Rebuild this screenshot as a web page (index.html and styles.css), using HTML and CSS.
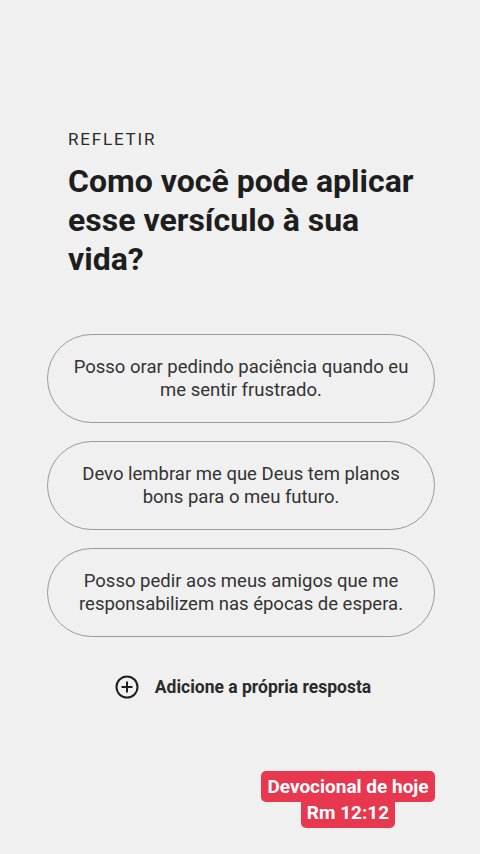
FILE: index.html
```html
<!DOCTYPE html>
<html lang="pt">
<head>
    <meta charset="UTF-8">
    <meta name="viewport" content="width=device-width, initial-scale=1.0">
    <title>Refletir</title>
    <link rel="stylesheet" href="styles.css">
</head>
<body>
    <main class="reflect">
        <p class="eyebrow">REFLETIR</p>
        <h1 class="question">Como você pode aplicar esse versículo à sua vida?</h1>

        <div class="answers">
            <div class="answer">Posso orar pedindo paciência quando eu me sentir frustrado.</div>
            <div class="answer">Devo lembrar me que Deus tem planos bons para o meu futuro.</div>
            <div class="answer">Posso pedir aos meus amigos que me responsabilizem nas épocas de espera.</div>
        </div>

        <div class="add-own">
            <svg class="add-icon" width="24" height="24" viewBox="0 0 24 24">
                <circle cx="12" cy="12" r="10.5" fill="none" stroke="#1f1f1f" stroke-width="2"/>
                <path d="M12 6.5v11M6.5 12h11" stroke="#1f1f1f" stroke-width="2"/>
            </svg>
            <span>Adicione a própria resposta</span>
        </div>
    </main>

    <!-- etiqueta sobreposta -->
    <div class="sticker">
        <span>Devocional de hoje<br>Rm 12:12</span>
    </div>
</body>
</html>
```

FILE: styles.css
```css
body {
    margin: 0;
    padding: 0;
    background-color: #f0f0f0;
    font-family: Roboto, "Noto Sans", Arial, sans-serif;
    color: #1f1f1f;
    height: 854px;
    position: relative;
}
.reflect {
    padding-top: 129px;
}
.eyebrow {
    margin: 0 0 0 68px;
    font-size: 17px;
    letter-spacing: 1.8px;
    color: #2a2a2a;
    line-height: 20px;
}
.question {
    margin: 13px 0 0 68px;
    width: 362px;
    font-size: 32px;
    font-weight: 700;
    line-height: 39px;
    color: #1e1e1e;
}
.answers {
    display: flex;
    flex-direction: column;
    gap: 18px;
    margin: 55px 45px 0 47px;
}
.answer {
    height: 89px;
    box-sizing: border-box;
    border: 1.3px solid #9a9a9a;
    border-radius: 45px;
    display: flex;
    align-items: center;
    justify-content: center;
    text-align: center;
    padding: 0 20px;
    font-size: 18.5px;
    line-height: 23px;
    color: #333;
}
.add-own {
    display: flex;
    justify-content: center;
    align-items: center;
    gap: 16px;
    margin-top: 38px;
    font-size: 17.5px;
    font-weight: 700;
    line-height: 24px;
    color: #2a2a2a;
    padding-left: 6px;
}
.sticker {
    position: absolute;
    top: 774px;
    left: 248px;
    width: 200px;
    text-align: center;
    font-size: 19px;
    font-weight: 700;
    line-height: 26px;
}
.sticker span {
    background-color: #e8384f;
    color: #fff;
    padding: 4px 6px;
    border-radius: 5px;
    -webkit-box-decoration-break: clone;
    box-decoration-break: clone;
}
```
